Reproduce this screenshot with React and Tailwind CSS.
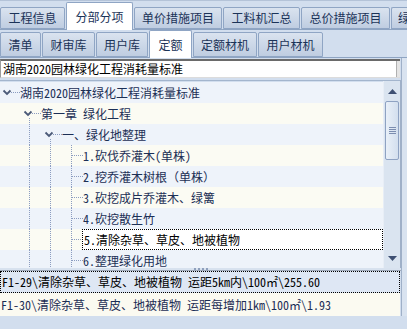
import React from 'react'

const TOP_TABS = [
  { label: '工程信息', w: 'w-[65px]' },
  { label: '分部分项', w: 'w-[67px]', sel: true },
  { label: '单价措施项目', w: 'w-[88px]' },
  { label: '工料机汇总', w: 'w-[77px]' },
  { label: '总价措施项目', w: 'w-[89px]' },
]

const SUB_TABS = [
  { label: '清单', w: 'w-[41px]' },
  { label: '财审库', w: 'w-[53px]' },
  { label: '用户库', w: 'w-[52px]' },
  { label: '定额', w: 'w-[43px]', sel: true },
  { label: '定额材机', w: 'w-[64px]' },
  { label: '用户材机', w: 'w-[65px]' },
]

const ROWS = [
  { text: '湖南2020园林绿化工程消耗量标准', w: 20, verts: [], half: null, h: [11, 20], chev: 7 },
  { text: '第一章 绿化工程', w: 41, verts: [], half: 29, h: [32, 41], chev: 28 },
  { text: '一、绿化地整理', w: 62, verts: [29], half: 50, h: [53, 62], chev: 49 },
  { text: '1.砍伐乔灌木(单株)', w: 83, verts: [29, 50, 71], h: [72, 83] },
  { text: '2.挖乔灌木树根（单株）', w: 83, verts: [29, 50, 71], h: [72, 83] },
  { text: '3.砍挖成片乔灌木、绿篱', w: 83, verts: [29, 50, 71], h: [72, 83] },
  { text: '4.砍挖散生竹', w: 83, verts: [29, 50, 71], h: [72, 83] },
  { text: '5.清除杂草、草皮、地被植物', w: 83, verts: [29, 50, 71], h: [72, 83], sel: true },
  { text: '6.整理绿化用地', w: 83, verts: [29, 50, 71], h: [72, 83] },
]

const Tab = ({ label, w, sel }) => (
  <div
    className={`${w} shrink-0 flex items-center justify-center border border-[#8fa5c4] rounded-t-[2px] text-[#1b3358] ${
      sel
        ? 'bg-white border-b-0 -mb-px h-[28px]'
        : 'bg-gradient-to-b from-[#dae3ef] to-[#bfcde1] h-full'
    }`}
  >
    {label}
  </div>
)

const Guide = ({ w, verts, half, h, chev }) => (
  <svg width={w} height={21} className="shrink-0">
    {verts.map((x) => (
      <line key={x} x1={x + 0.5} x2={x + 0.5} y1={0} y2={21} stroke="#8b9cc0" strokeDasharray="1 1" />
    ))}
    {half && <line x1={half + 0.5} x2={half + 0.5} y1={15} y2={21} stroke="#8b9cc0" strokeDasharray="1 1" />}
    <line x1={h[0]} x2={h[1]} y1={10.5} y2={10.5} stroke="#8b9cc0" strokeDasharray="1 1" />
    {chev && (
      <path
        d={`M${chev - 3.5} 8.5 L${chev} 12 L${chev + 3.5} 8.5`}
        fill="none"
        stroke="#4b5a78"
        strokeWidth="1.8"
      />
    )}
  </svg>
)

export default function App() {
  return (
    <div className="w-[407px] h-[329px] overflow-hidden bg-[#d2deee] font-['Noto_Sans_Mono_CJK_SC','Noto_Sans_CJK_SC',sans-serif] text-[12px] leading-none">
      {/* top tabs */}
      <div className="h-[30px] pt-[6px] flex items-end gap-[1px] border-b border-[#8ea4c2] border-t border-t-[#b4c3d8]">
        {TOP_TABS.map((t) => (
          <Tab key={t.label} {...t} />
        ))}
        <div className="flex-1 h-full overflow-hidden border border-r-0 border-[#8fa5c4] rounded-tl-[2px] bg-gradient-to-b from-[#dae3ef] to-[#bfcde1] flex items-center pl-[6px] text-[#1b3358]">
          <span className="w-[10px] overflow-hidden">绿</span>
        </div>
      </div>

      {/* sub tabs */}
      <div className="h-[28px] pt-[2px] flex items-end gap-[1px] border-b border-[#8ea4c2]">
        {SUB_TABS.map((t) => (
          <Tab key={t.label} {...t} />
        ))}
      </div>

      <div className="flex">
        <div className="w-[401px] flex flex-col">
          {/* combo */}
          <div className="mt-[1px] h-[19px] w-[400px] flex bg-white border-t-2 border-t-[#6a6a6a] border-l border-l-[#9c9c9c] border-b border-b-[#dcdcdc]">
            <div className="flex-1 flex items-center pl-[2px] text-black">湖南2020园林绿化工程消耗量标准</div>
            <div className="w-[4px] bg-[#e4e4e4] border-l border-[#b0b0b0]" />
          </div>

          {/* tree */}
          <div className="mt-[2px] h-[188px] flex border-t border-[#a3b5cd] border-r border-r-[#9fb0c8] overflow-hidden">
            <div className="flex-1 pt-[1px] overflow-hidden">
              {ROWS.map((r, i) => (
                <div
                  key={i}
                  className={`h-[21px] flex items-center ${i % 2 === 0 ? 'bg-[#eef3fa]' : 'bg-[#fbfbf3]'}`}
                >
                  <Guide {...r} />
                  {r.sel ? (
                    <div className="-ml-px flex-1 h-[21px] flex items-center pl-px bg-white border border-dotted border-black text-black">
                      {r.text}
                    </div>
                  ) : (
                    <span className="text-[#1c2f55] whitespace-nowrap">{r.text}</span>
                  )}
                </div>
              ))}
            </div>
            <div className="w-[17px] flex flex-col bg-[#dae4f0] border-l border-[#e8eef6]">
              <div className="h-[20px] flex items-center justify-center">
                <svg width="9" height="5"><polygon points="0,5 4.5,0 9,5" fill="#3d4f72" /></svg>
              </div>
              <div className="h-[59px] mx-[1px] rounded-[2px] border border-[#8ea2c2] bg-gradient-to-r from-[#e9f0f8] to-[#d3dfee] flex flex-col items-center justify-center gap-[1px]">
                <div className="w-[7px] h-px bg-[#7b8db0]" />
                <div className="w-[7px] h-px bg-[#7b8db0]" />
                <div className="w-[7px] h-px bg-[#7b8db0]" />
                <div className="w-[7px] h-px bg-[#7b8db0]" />
              </div>
              <div className="flex-1" />
              <div className="h-[20px] flex items-center justify-center">
                <svg width="9" height="5"><polygon points="0,0 9,0 4.5,5" fill="#3d4f72" /></svg>
              </div>
            </div>
          </div>

          {/* splitter */}
          <div className="h-[3px] flex flex-col">
            <div className="h-[2px] flex justify-center gap-[2px] bg-[#d8e2ef]">
              <div className="w-[2px] h-[2px] bg-[#8fa0bd]" />
              <div className="w-[2px] h-[2px] bg-[#8fa0bd]" />
              <div className="w-[2px] h-[2px] bg-[#8fa0bd]" />
              <div className="w-[2px] h-[2px] bg-[#8fa0bd]" />
            </div>
            <div className="h-px bg-[#9ea8b8]" />
          </div>

          {/* result list */}
          <div className="w-[400px] h-[22px] flex items-center pl-px bg-[#dee7f4] border border-dotted border-black text-black whitespace-nowrap">
            F1-29\清除杂草、草皮、地被植物 运距5km内\100㎡\255.60
          </div>
          <div className="w-[400px] h-[23px] flex items-center pl-px bg-[#fbfaf1] text-[#1b2d55] whitespace-nowrap">
            F1-30\清除杂草、草皮、地被植物 运距每增加1km\100㎡\1.93
          </div>
        </div>
        <div className="flex-1 border-l border-[#9fb0c8] bg-[#d9e3f0]" />
      </div>
    </div>
  )
}
